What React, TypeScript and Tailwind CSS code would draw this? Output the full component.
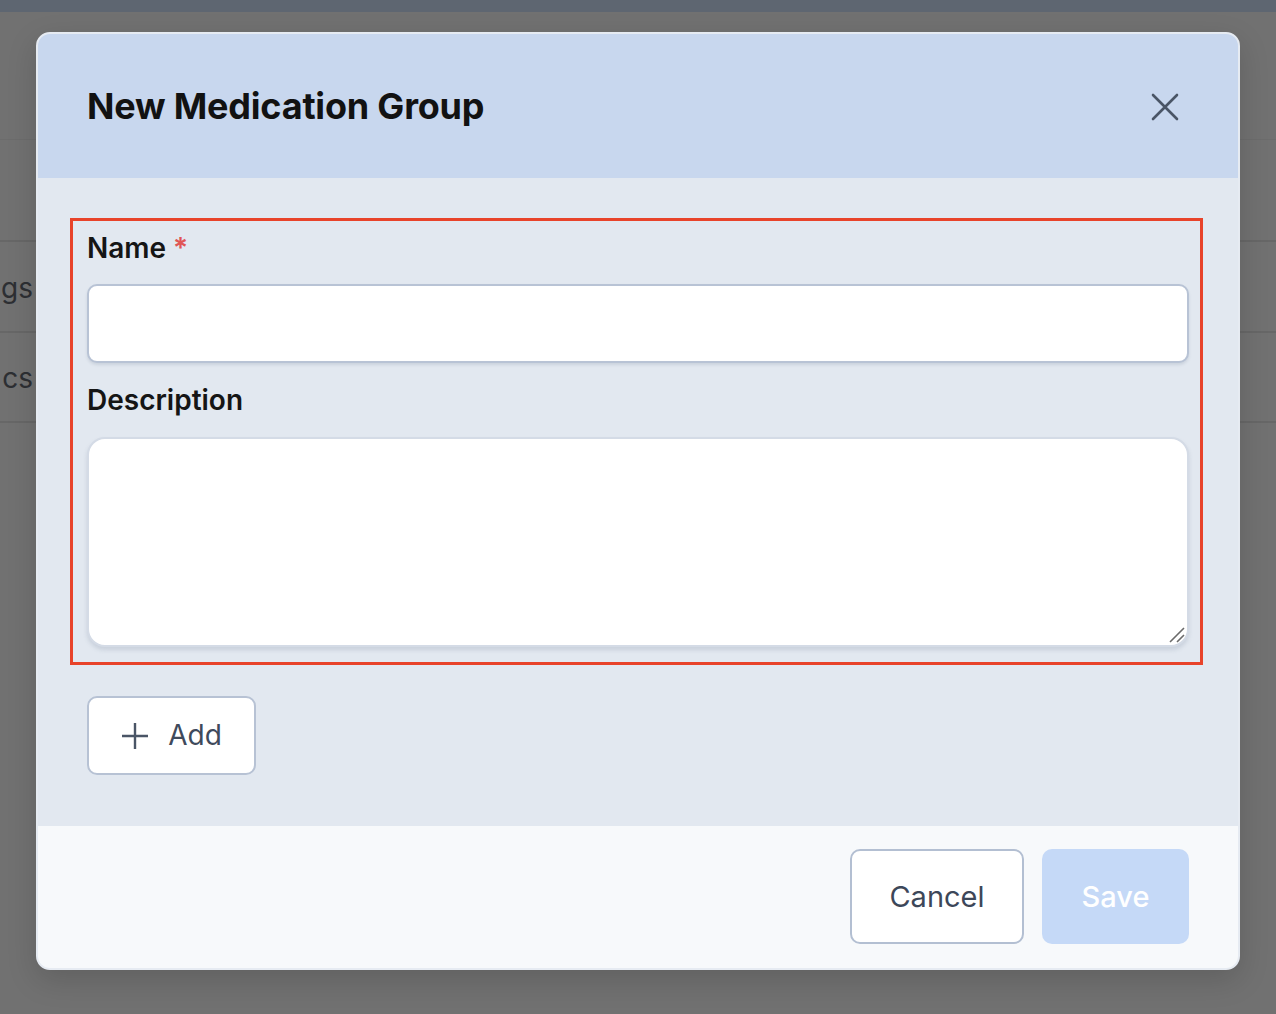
import React from "react";

const font = { fontFamily: "Inter, 'Noto Sans', sans-serif" };

function BgRow({ label, h }: { label: string; h: string }) {
  return (
    <div className={`${h} flex items-center border-b-[2px] border-[#676767]`}>
      <div className="w-[33px] flex justify-end">
        <span className="whitespace-nowrap text-[28px] text-[#2d2f33] leading-none pt-[2px]">{label}</span>
      </div>
    </div>
  );
}

export default function App() {
  return (
    <div className="relative w-[1276px] h-[1014px] overflow-hidden bg-[#717171]" style={font}>
      {/* background page under overlay */}
      <div className="h-[12px] bg-[#5e6671]" />
      <div className="h-[128px] border-b border-[#6c6c6c]" />
      <div className="h-[102px] border-b-[2px] border-[#676767]" />
      <BgRow label="gs" h="h-[91px]" />
      <BgRow label="cs" h="h-[90px]" />

      {/* modal */}
      <div className="absolute left-[36px] top-[32px] w-[1204px] h-[938px] rounded-[14px] border-2 border-[#e6ebf2] overflow-hidden flex flex-col bg-[#e2e8f0] shadow-[0_10px_30px_rgba(0,0,0,0.15)]">
        {/* header */}
        <div className="h-[144px] shrink-0 bg-[#c8d7ee] flex items-center justify-between pl-[49px] pr-[59px]">
          <h2 className="text-[36px] font-bold text-[#121212] tracking-[-0.2px] leading-none">
            New Medication Group
          </h2>
          <svg width="28" height="28" viewBox="0 0 28 28" className="mt-[1px]">
            <path d="M2 2 L26 26 M26 2 L2 26" stroke="#4a5566" strokeWidth="2.6" strokeLinecap="round" fill="none" />
          </svg>
        </div>

        {/* body */}
        <div className="flex-1 bg-[#e2e8f0] pt-[40px] pb-[51px] flex flex-col">
          <div className="ml-[32px] w-[1133px] border-[3px] border-[#e8432a] pt-[9px] pb-[15px] pl-[14px] pr-[11px] flex flex-col">
            <label className="h-[36px] flex items-center text-[28px] font-semibold text-[#151515] leading-[36px]">
              Name
              <span className="ml-[7px] text-[#e05555] font-semibold">*</span>
            </label>
            <input
              className="mt-[18px] h-[79px] w-full rounded-[10px] border-2 border-[#b8c3d5] bg-white shadow-[0_2px_3px_rgba(100,116,139,0.18)] outline-none px-4 text-[28px]"
              style={font}
            />
            <label className="mt-[19px] h-[36px] flex items-center text-[28px] font-semibold text-[#151515] leading-[36px]">
              Description
            </label>
            <div className="relative mt-[19px]">
              <textarea
                className="block h-[210px] w-full resize-none rounded-[18px] border-2 border-[#d4dbe6] bg-white shadow-[0_3px_4px_rgba(100,116,139,0.2)] outline-none p-4 text-[28px]"
                style={font}
              />
              <svg width="18" height="18" viewBox="0 0 18 18" className="absolute right-[3px] bottom-[3px]">
                <path d="M2 16 L16 2 M9 16 L16 9" stroke="#6b6b6b" strokeWidth="1.6" fill="none" />
              </svg>
            </div>
          </div>

          <div className="mt-[31px] ml-[49px]">
            <button className="h-[79px] w-[169px] rounded-[10px] border-2 border-[#b7c2d4] bg-white flex items-center justify-center gap-[19px] text-[28px] text-[#3f4a5c] leading-none">
              <svg width="28" height="28" viewBox="0 0 28 28">
                <path d="M14 1 V27 M1 14 H27" stroke="#4a5566" strokeWidth="2.4" fill="none" />
              </svg>
              <span className="pb-[1px]">Add</span>
            </button>
          </div>
        </div>

        {/* footer */}
        <div className="h-[142px] shrink-0 bg-[#f7f9fb] flex items-start justify-end gap-[18px] pt-[23px] pr-[49px]">
          <button className="h-[95px] w-[174px] rounded-[10px] border-2 border-[#b3bfd2] bg-white text-[29px] text-[#3d4759] leading-none">
            Cancel
          </button>
          <button className="h-[95px] w-[147px] rounded-[10px] bg-[#c5d9f7] text-[29px] font-medium text-white leading-none">
            Save
          </button>
        </div>
      </div>
    </div>
  );
}
